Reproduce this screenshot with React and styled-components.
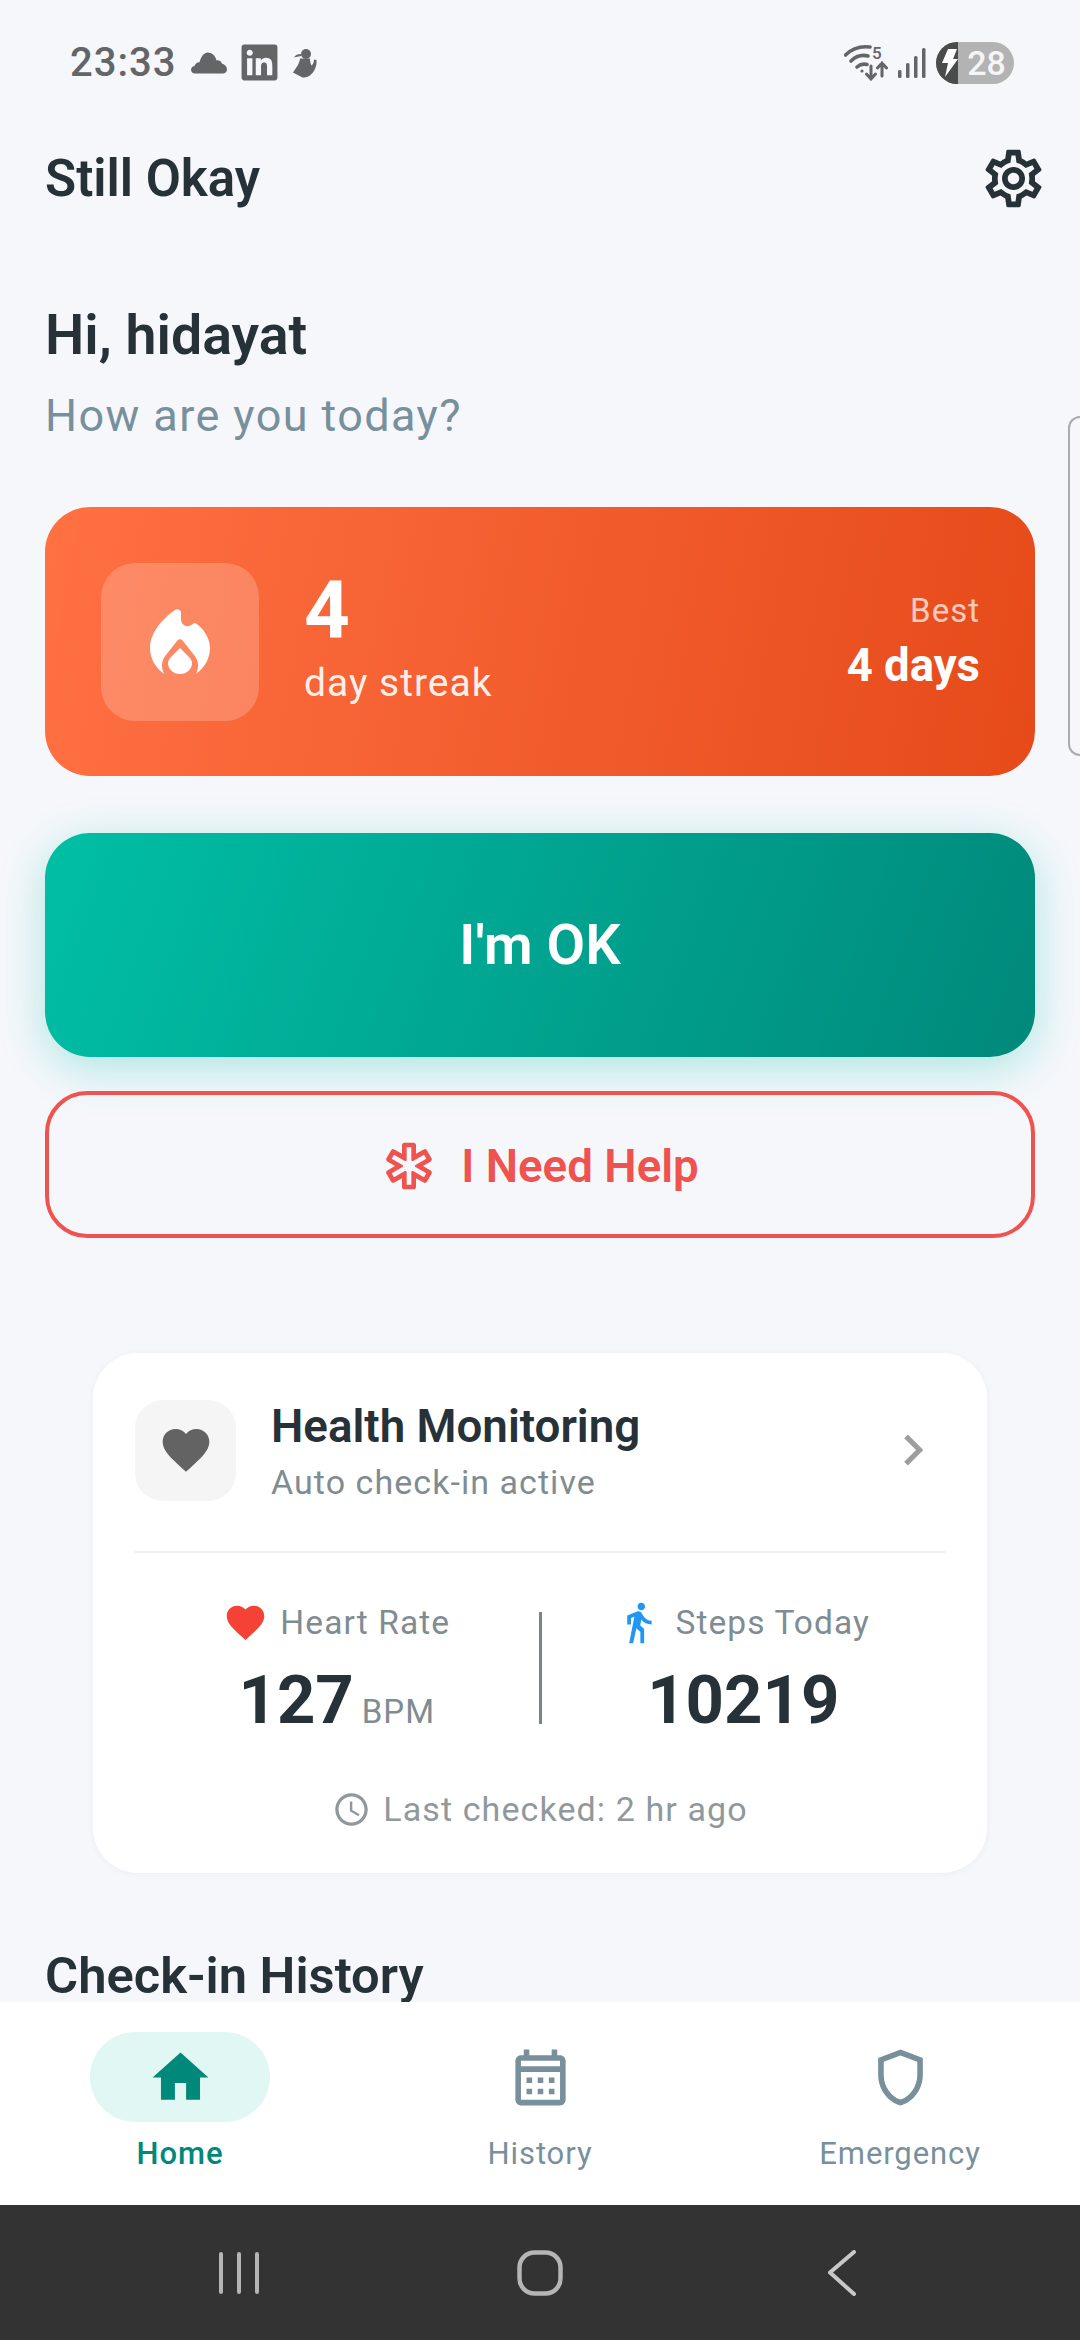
import styled, { createGlobalStyle } from 'styled-components';
import { FaLinkedin } from 'react-icons/fa';
import {
  MdAccessTime,
  MdChevronRight,
  MdDirectionsWalk,
  MdFavorite,
  MdHome,
  MdOutlineCalendarMonth,
  MdOutlineEmergency,
  MdOutlineSettings,
  MdOutlineShield,
} from 'react-icons/md';

const GlobalStyle = createGlobalStyle`
  html, body {
    margin: 0;
    padding: 0;
    background: #f5f7fb;
  }
  * {
    box-sizing: border-box;
  }
  body {
    font-family: Roboto, "Noto Sans", sans-serif;
    color: #263238;
  }
`;

const Page = styled.div`
  position: relative;
  width: 1080px;
  height: 2340px;
  display: flex;
  flex-direction: column;
  overflow: hidden;
  background: #f5f7fb;
`;

// Status bar
const StatusBar = styled.div`
  height: 125px;
  flex: none;
  display: flex;
  align-items: center;
  justify-content: space-between;
  padding: 0 66px 0 70px;
  color: #636566;
`;

const StatusGroup = styled.div`
  display: flex;
  align-items: center;
  gap: ${(p) => p.$gap || 0}px;
`;

const Time = styled.span`
  font-size: 40px;
  font-weight: 500;
  letter-spacing: 1px;
  margin-right: 3px;
  line-height: 1;
`;

const Battery = styled.div`
  display: flex;
  width: 78px;
  height: 42px;
  border-radius: 21px;
  overflow: hidden;
  background: #b3b3b3;
`;

const BatteryBolt = styled.div`
  width: 22px;
  flex: none;
  background: #4a4c4b;
  display: flex;
  align-items: center;
  justify-content: flex-end;
`;

const BatteryLevel = styled.span`
  flex: 1;
  text-align: center;
  color: #f5f5f5;
  font-size: 34px;
  font-weight: 500;
  line-height: 42px;
  padding-left: 1px;
`;

// App bar
const AppBar = styled.div`
  height: 106px;
  flex: none;
  display: flex;
  align-items: center;
  justify-content: space-between;
  padding: 0 32px 0 45px;
`;

const AppTitle = styled.h1`
  margin: 0;
  font-size: 51px;
  font-weight: 600;
  color: #263238;
`;

// Scrolling content
const Content = styled.main`
  flex: 1;
  min-height: 0;
  overflow: hidden;
  padding: 75px 45px 0;
`;

const Greeting = styled.h2`
  margin: 0;
  font-size: 55.5px;
  line-height: 60px;
  font-weight: 600;
  color: #263238;
`;

const Subtitle = styled.p`
  margin: 25px 0 0;
  font-size: 45px;
  line-height: 50px;
  letter-spacing: 1.4px;
  color: #78909c;
`;

const StreakCard = styled.section`
  margin-top: 66px;
  height: 269px;
  border-radius: 45px;
  padding: 0 55px 0 56px;
  display: flex;
  align-items: center;
  color: #fff;
  background: linear-gradient(100deg, #ff7043 0%, #e64a19 100%);
`;

const FlameBox = styled.div`
  width: 158px;
  height: 158px;
  flex: none;
  border-radius: 34px;
  display: flex;
  align-items: center;
  justify-content: center;
  background: rgba(255, 255, 255, 0.2);
`;

const StreakText = styled.div`
  flex: 1;
  margin-left: 45px;
  display: flex;
  flex-direction: column;
`;

const StreakCount = styled.span`
  font-size: 80px;
  line-height: 68px;
  font-weight: 700;
`;

const StreakLabel = styled.span`
  font-size: 39px;
  line-height: 50px;
  letter-spacing: 1px;
  margin-top: 14px;
  opacity: 0.9;
`;

const BestBlock = styled.div`
  display: flex;
  flex-direction: column;
  align-items: flex-end;
`;

const BestLabel = styled.span`
  font-size: 33px;
  line-height: 40px;
  letter-spacing: 1px;
  opacity: 0.7;
`;

const BestValue = styled.span`
  margin-top: 8px;
  font-size: 45.500px;
  line-height: 54px;
  font-weight: 700;
`;

const OkButton = styled.button`
  display: block;
  width: 100%;
  margin-top: 57px;
  height: 224px;
  border: none;
  border-radius: 45px;
  font-family: inherit;
  font-size: 56px;
  font-weight: 600;
  color: #fff;
  background: linear-gradient(110deg, #00bfa5 0%, #00897b 100%);
  box-shadow: 0 11px 45px rgba(0, 191, 165, 0.3);
`;

const HelpButton = styled.button`
  width: 100%;
  margin-top: 34px;
  height: 147px;
  border: 4px solid #ef5350;
  border-radius: 42px;
  background: transparent;
  font-family: inherit;
  font-size: 45.700px;
  font-weight: 600;
  color: #ef5350;
  display: flex;
  align-items: center;
  justify-content: center;
  gap: 24px;
  padding-top: 4px;
`;

const HealthCard = styled.section`
  margin: 115px 48px 0;
  height: 520px;
  border-radius: 45px;
  padding: 45px 42px 0;
  background: #fff;
  box-shadow: 0 1px 6px rgba(38, 50, 56, 0.05);
`;

const HealthHead = styled.div`
  display: flex;
  align-items: center;
  padding-bottom: 49px;
  border-bottom: 2px solid #eceff1;
`;

const HeartBox = styled.div`
  width: 101px;
  height: 101px;
  flex: none;
  border-radius: 28px;
  display: flex;
  align-items: center;
  justify-content: center;
  background: #f5f5f5;
  color: #636363;
`;

const HeadText = styled.div`
  flex: 1;
  margin-left: 35px;
  padding-top: 3px;
`;

const HeadTitle = styled.div`
  font-size: 45.700px;
  line-height: 52px;
  font-weight: 600;
  color: #263238;
`;

const HeadSub = styled.div`
  margin-top: 9px;
  font-size: 34px;
  line-height: 40px;
  letter-spacing: 1.05px;
  color: #7f8c92;
`;

const ChevronSlot = styled.div`
  display: flex;
  margin-right: 1px;
  color: #9e9e9e;
`;

const Stats = styled.div`
  display: grid;
  grid-template-columns: 1fr 3px 1fr;
  margin-top: 45px;
`;

const Stat = styled.div`
  display: flex;
  flex-direction: column;
  align-items: center;
`;

const StatLabel = styled.div`
  display: flex;
  align-items: center;
  height: 48px;
  gap: ${(p) => p.$gap}px;
  font-size: 33.5px;
  letter-spacing: 1.1px;
  color: #7f8c92;
`;

const StatValue = styled.div`
  margin-top: 15px;
  font-size: 67px;
  line-height: 78px;
  font-weight: 700;
  color: #263238;
  display: flex;
  align-items: baseline;
`;

const StatUnit = styled.span`
  margin-left: 8px;
  font-size: 33px;
  font-weight: 400;
  letter-spacing: 1px;
  color: #7f8c92;
`;

const StatDivider = styled.div`
  width: 3px;
  margin-top: 14px;
  height: 112px;
  background: #78858c;
`;

const LastChecked = styled.div`
  margin-top: 38px;
  display: flex;
  align-items: center;
  justify-content: center;
  gap: 12px;
  font-size: 34px;
  letter-spacing: 1.1px;
  color: #90989c;
`;

const SectionTitle = styled.h3`
  margin: 73px 0 0;
  font-size: 50.700px;
  line-height: 60px;
  font-weight: 600;
  color: #263238;
`;

// Bottom navigation
const BottomNav = styled.nav`
  height: 203px;
  flex: none;
  display: grid;
  grid-template-columns: repeat(3, 1fr);
  padding-top: 30px;
  background: #fff;
`;

const NavItem = styled.div`
  display: flex;
  flex-direction: column;
  align-items: center;
  font-size: 31px;
  letter-spacing: ${(p) => (p.$active ? 1 : 0.9)}px;
  font-weight: ${(p) => (p.$active ? 500 : 400)};
  color: ${(p) => (p.$active ? '#00897b' : '#78909c')};
`;

const NavIcon = styled.div`
  width: 180px;
  height: 90px;
  border-radius: 45px;
  display: flex;
  align-items: center;
  justify-content: center;
  margin-bottom: 13px;
  background: ${(p) => (p.$active ? '#e0f7f3' : 'transparent')};
`;

// System navigation
const SystemBar = styled.div`
  height: 135px;
  flex: none;
  display: grid;
  grid-template-columns: repeat(3, 1fr);
  background: #333;
`;

const SystemKey = styled.div`
  display: flex;
  align-items: center;
  justify-content: ${(p) => p.$align || 'center'};
  padding: ${(p) => p.$pad || 0};
`;

const EdgeHandle = styled.div`
  position: absolute;
  top: 416px;
  right: 0;
  width: 12px;
  height: 340px;
  border: 2.5px solid #a9abac;
  border-right: none;
  border-radius: 12px 0 0 12px;
`;

const Cloud = () => (
  <svg width="36" height="22" viewBox="0 0 36 22" fill="currentColor">
    <path d="M4 21.5C1.8 21.5 0 20 0 17.8c0-2 1.4-3.5 3.4-3.9C4.500 11.500 6.500 10 8.500 10.300 10 4.200 13.500 0.500 16.500 0.500c4.500 0 8 3 9 8 1.800-.6 4.500.2 5.500 3.200C33.500 12 36 14.500 36 17.500c0 2.300-1.700 4-4 4H4z" />
  </svg>
);

const Wellness = () => (
  <svg width="26" height="30" viewBox="0 0 26 30" fill="currentColor">
    <circle cx="14" cy="6" r="5" />
    <path d="M9 6C6 6 3 7 2 9.500c2-.8 4-.8 7-1.500z" />
    <path d="M8 10.500h10c0 3 .5 5 1.500 7 1.500-1 2.500-3 2.500-6l2.500.5c.5 7-2.500 12-6 15-2 2-5 2.800-8 2.400L1 24.500l5-7.500c1-2 1.800-4 2-6.500z" />
  </svg>
);

const WifiActivity = () => (
  <svg width="44" height="38" viewBox="0 0 44 38" fill="none" stroke="currentColor" strokeWidth="3.600" strokeLinecap="round">
    <path d="M1.500 11C9 3.500 18 2 26 3" />
    <path d="M7 17c5-5 11-6.500 17-5" />
    <path d="M13 23c3-2.600 6.500-3.400 10-2.500" />
    <circle cx="18" cy="27" r="1.600" fill="currentColor" stroke="none" />
    <text x="28" y="15" fontFamily="Roboto, sans-serif" fontSize="17" fontWeight="500" fill="currentColor" stroke="none">5</text>
    <path d="M27 22v13M22.500 30l4.500 5 4.500-5" strokeWidth="3" />
    <path d="M38 32V19M33.500 24l4.500-5 4.500 5" strokeWidth="3" />
  </svg>
);

const Signal = () => (
  <svg width="28" height="30" viewBox="0 0 28 30" fill="currentColor">
    <rect x="0" y="22" width="3.500" height="8" rx="1.500" />
    <rect x="8" y="15" width="3.500" height="15" rx="1.500" />
    <rect x="16" y="8" width="3.500" height="22" rx="1.500" />
    <rect x="24" y="0" width="3.500" height="30" rx="1.500" />
  </svg>
);

const Flame = () => (
  <svg width="60" height="66" viewBox="0 0 60 66" fill="#fff">
    <path d="M25 1C27.500-.5 31 .5 31 4v6c0 5 4 8 8 7 3-.5 4-3.500 7-2.500C53 19 60 29 60 39c0 11-6 20-14 26 3-7 3-13-2-19L33 32c-2-2.500-4-2.500-6 0L16 46c-5 6-5 12-2 19C6 59 0 50 0 39 0 24 12 10 25 1z" />
    <path d="M30 39l8 8c3 3 4 5 4 7 0 6-5 11-12 11s-12-5-12-11c0-2 1-4 4-7z" />
  </svg>
);

const BoltGlyph = () => (
  <svg width="16" height="28" viewBox="0 0 16 28" fill="#fff">
    <path d="M6 0h9l-4 10h5L3 28l3-14H0z" />
  </svg>
);

const RecentsKey = () => (
  <svg width="40" height="44" viewBox="0 0 40 44" fill="#b5b5b5">
    <rect x="0" y="1" width="4" height="42" rx="2" />
    <rect x="18" y="1" width="4" height="42" rx="2" />
    <rect x="36" y="1" width="4" height="42" rx="2" />
  </svg>
);

const HomeKey = () => (
  <svg width="46" height="46" viewBox="0 0 46 46" fill="none" stroke="#b5b5b5" strokeWidth="4.500">
    <rect x="2.500" y="2.500" width="41" height="41" rx="15" />
  </svg>
);

const BackKey = () => (
  <svg width="30" height="46" viewBox="0 0 30 46" fill="none" stroke="#c8c8c8" strokeWidth="4" strokeLinecap="round" strokeLinejoin="round">
    <path d="M27 2L3 22.500 27 44" />
  </svg>
);

export default function App() {
  return (
    <Page>
      <GlobalStyle />
      <StatusBar>
        <StatusGroup $gap={12}>
          <Time>23:33</Time>
          <Cloud />
          <FaLinkedin size={41} />
          <Wellness />
        </StatusGroup>
        <StatusGroup $gap={10}>
          <WifiActivity />
          <Signal />
          <Battery>
            <BatteryBolt>
              <BoltGlyph />
            </BatteryBolt>
            <BatteryLevel>28</BatteryLevel>
          </Battery>
        </StatusGroup>
      </StatusBar>

      <AppBar>
        <AppTitle>Still Okay</AppTitle>
        <MdOutlineSettings size={69} color="#263238" />
      </AppBar>

      <Content>
        <Greeting>Hi, hidayat</Greeting>
        <Subtitle>How are you today?</Subtitle>

        <StreakCard>
          <FlameBox>
            <Flame />
          </FlameBox>
          <StreakText>
            <StreakCount>4</StreakCount>
            <StreakLabel>day streak</StreakLabel>
          </StreakText>
          <BestBlock>
            <BestLabel>Best</BestLabel>
            <BestValue>4 days</BestValue>
          </BestBlock>
        </StreakCard>

        <OkButton>I'm OK</OkButton>

        <HelpButton>
          <MdOutlineEmergency size={56} />
          I Need Help
        </HelpButton>

        <HealthCard>
          <HealthHead>
            <HeartBox>
              <MdFavorite size={56} />
            </HeartBox>
            <HeadText>
              <HeadTitle>Health Monitoring</HeadTitle>
              <HeadSub>Auto check-in active</HeadSub>
            </HeadText>
            <ChevronSlot>
              <MdChevronRight size={62} />
            </ChevronSlot>
          </HealthHead>

          <Stats>
            <Stat>
              <StatLabel $gap={12}>
                <MdFavorite size={45} color="#f44336" />
                Heart Rate
              </StatLabel>
              <StatValue>
                127
                <StatUnit>BPM</StatUnit>
              </StatValue>
            </Stat>
            <StatDivider />
            <Stat>
              <StatLabel $gap={14}>
                <MdDirectionsWalk size={45} color="#2196f3" />
                Steps Today
              </StatLabel>
              <StatValue>10219</StatValue>
            </Stat>
          </Stats>

          <LastChecked>
            <MdAccessTime size={39} />
            Last checked: 2 hr ago
          </LastChecked>
        </HealthCard>

        <SectionTitle>Check-in History</SectionTitle>
      </Content>

      <BottomNav>
        <NavItem $active>
          <NavIcon $active>
            <MdHome size={67} />
          </NavIcon>
          Home
        </NavItem>
        <NavItem>
          <NavIcon>
            <MdOutlineCalendarMonth size={67} />
          </NavIcon>
          History
        </NavItem>
        <NavItem>
          <NavIcon>
            <MdOutlineShield size={67} />
          </NavIcon>
          Emergency
        </NavItem>
      </BottomNav>

      <SystemBar>
        <SystemKey $align="flex-end" $pad="0 101px 0 0">
          <RecentsKey />
        </SystemKey>
        <SystemKey>
          <HomeKey />
        </SystemKey>
        <SystemKey $align="flex-start" $pad="0 0 0 107px">
          <BackKey />
        </SystemKey>
      </SystemBar>

      <EdgeHandle />
    </Page>
  );
}
